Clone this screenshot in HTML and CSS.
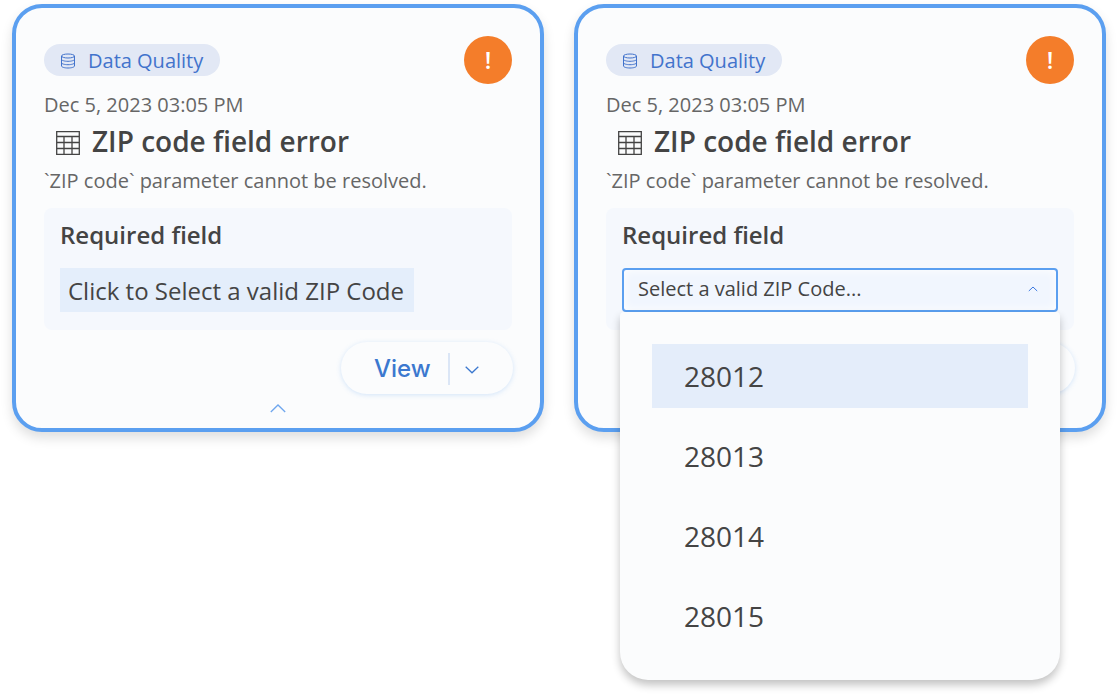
FILE: index.html
```html
<!DOCTYPE html>
<html lang="en">
<head>
<meta charset="utf-8">
<title>ZIP code field error</title>
<link rel="stylesheet" href="styles.css">
</head>
<body>
<main class="board">
  <article class="card">
    <div class="top">
      <span class="tag">
        <svg class="tag-icon" viewBox="0 0 14 15" fill="none" stroke="currentColor" stroke-width="1"><ellipse cx="7" cy="2.500" rx="6.500" ry="2"/><path d="M.5 2.500v10c0 1.100 2.900 2 6.500 2s6.500-.9 6.500-2v-10M.5 5.800c0 1.100 2.900 2 6.500 2s6.500-.9 6.500-2M.5 9.200c0 1.100 2.900 2 6.500 2s6.500-.9 6.500-2"/></svg>
        Data Quality
      </span>
      <span class="alert">!</span>
    </div>
    <div class="date">Dec 5, 2023 03:05 PM</div>
    <h2 class="title">
      <svg class="table-icon" viewBox="0 0 24 24" fill="none" stroke="currentColor" stroke-width="1.300"><path d="M.7.700h22.600v22.600H.7zM.7 5.500h22.600M.7 11.500h22.600M.7 17.500h22.600M8 5.500v17.800M16 5.500v17.800"/></svg>
      ZIP code field error
    </h2>
    <p class="desc">`ZIP code` parameter cannot be resolved.</p>
    <section class="panel">
      <h3 class="panel-title">Required field</h3>
      <div class="link-row"><span class="pick">Click to Select a valid ZIP Code</span></div>
    </section>
    <div class="actions">
      <div class="view-btn">
        <span class="view-label">View</span>
        <span class="view-sep"></span>
        <svg class="view-caret" viewBox="0 0 14 8" fill="none" stroke="currentColor" stroke-width="1.300"><path d="M.7.800 7 6.800 13.300.800"/></svg>
      </div>
    </div>
    <svg class="collapse" viewBox="0 0 16 9" fill="none" stroke="currentColor" stroke-width="1.300"><path d="M.8 8 8 1l7.200 7"/></svg>
  </article>

  <article class="card">
    <div class="top">
      <span class="tag">
        <svg class="tag-icon" viewBox="0 0 14 15" fill="none" stroke="currentColor" stroke-width="1"><ellipse cx="7" cy="2.500" rx="6.500" ry="2"/><path d="M.5 2.500v10c0 1.100 2.900 2 6.500 2s6.500-.9 6.500-2v-10M.5 5.800c0 1.100 2.900 2 6.500 2s6.500-.9 6.500-2M.5 9.200c0 1.100 2.900 2 6.500 2s6.500-.9 6.500-2"/></svg>
        Data Quality
      </span>
      <span class="alert">!</span>
    </div>
    <div class="date">Dec 5, 2023 03:05 PM</div>
    <h2 class="title">
      <svg class="table-icon" viewBox="0 0 24 24" fill="none" stroke="currentColor" stroke-width="1.300"><path d="M.7.700h22.600v22.600H.7zM.7 5.500h22.600M.7 11.500h22.600M.7 17.500h22.600M8 5.500v17.800M16 5.500v17.800"/></svg>
      ZIP code field error
    </h2>
    <p class="desc">`ZIP code` parameter cannot be resolved.</p>
    <section class="panel">
      <h3 class="panel-title">Required field</h3>
      <div class="select">
        <span>Select a valid ZIP Code...</span>
        <svg class="select-caret" viewBox="0 0 10 6" fill="none" stroke="currentColor" stroke-width="1"><path d="M.8 5 5 1l4.200 4"/></svg>
      </div>
    </section>
    <div class="actions">
      <div class="view-btn">
        <span class="view-label">View</span>
        <span class="view-sep"></span>
        <svg class="view-caret" viewBox="0 0 14 8" fill="none" stroke="currentColor" stroke-width="1.300"><path d="M.7.800 7 6.800 13.300.800"/></svg>
      </div>
    </div>
    <ul class="menu">
      <li class="option option-active">28012</li>
      <li class="option">28013</li>
      <li class="option">28014</li>
      <li class="option">28015</li>
    </ul>
  </article>
</main>
</body>
</html>
```
FILE: styles.css
```css
* { box-sizing: border-box; }

html, body { margin: 0; padding: 0; background: #fff; }

body {
  width: 1118px;
  height: 700px;
  overflow: hidden;
  font-family: "Open Sans", sans-serif;
  color: #444;
}

.board {
  display: flex;
  gap: 30px;
  padding: 4px 12px 0;
  align-items: flex-start;
}

.card {
  position: relative;
  width: 532px;
  height: 428px;
  padding: 28px 28px 0;
  border: 4px solid #5b9ff0;
  border-radius: 30px;
  background: #fbfcfd;
  box-shadow: 0 6px 12px rgba(0, 0, 0, 0.13);
}

.top {
  display: flex;
  justify-content: space-between;
  align-items: center;
  height: 48px;
}

.tag {
  display: flex;
  align-items: center;
  gap: 13px;
  height: 32px;
  padding: 2px 17px 0;
  border-radius: 16px;
  background: #e2e8f5;
  color: #4273cc;
  font-size: 20px;
  line-height: 30px;
}

.tag-icon { width: 14px; height: 16px; margin-top: -1px; }

.alert {
  width: 48px;
  height: 48px;
  border-radius: 50%;
  background: #f47d2a;
  color: #fff;
  font-size: 24px;
  font-weight: 600;
  line-height: 48px;
  text-align: center;
}

.date {
  margin-top: 8px;
  font-size: 20px;
  line-height: 26px;
  color: #666;
}

.title {
  display: flex;
  align-items: center;
  gap: 12px;
  height: 40px;
  margin: 3px 0 0;
  padding-left: 12px;
  font-size: 28px;
  font-weight: 600;
  line-height: 40px;
  color: #444;
}

.table-icon { width: 24px; height: 24px; margin-top: 4px; }

.desc {
  margin: 7px 0 0;
  font-size: 20px;
  line-height: 26px;
  color: #666;
}

.panel {
  height: 122px;
  margin-top: 14px;
  padding: 11px 16px 0;
  border-radius: 8px;
  background: #f5f8fd;
}

.panel-title {
  margin: 0;
  font-size: 24px;
  font-weight: 600;
  line-height: 32px;
  color: #444;
}

.link-row { display: flex; margin-top: 17px; }

.pick {
  height: 44px;
  padding: 0 10px 0 8px;
  background: #e4eefb;
  font-size: 24px;
  line-height: 46px;
  color: #444;
}

.select {
  display: flex;
  justify-content: space-between;
  align-items: center;
  height: 44px;
  margin-top: 17px;
  padding: 0 18px 3px 14px;
  border: 2px solid #5b9ff0;
  border-radius: 4px;
  background: #f1f6fe;
  box-shadow: inset 0 0 10px #fff;
  font-size: 20px;
  color: #444;
}

.select-caret { width: 10px; height: 6px; color: #3b78e0; }

.actions {
  display: flex;
  justify-content: flex-end;
  margin: 12px -1px 0 0;
}

.view-btn {
  display: flex;
  align-items: center;
  width: 172px;
  height: 52px;
  padding: 1px 0 0 33px;
  border-radius: 26px;
  background: #fbfcfd;
  box-shadow: 0 1px 5px rgba(91, 159, 240, 0.25);
  color: #3b78cf;
}

.view-label {
  font-family: Inter, sans-serif;
  font-size: 24px;
  font-weight: 500;
  line-height: 52px;
}

.view-sep {
  width: 2px;
  height: 32px;
  margin-left: 17px;
  background: #dbe6f6;
}

.view-caret { width: 14px; height: 8px; margin-left: 15px; margin-top: 2px; }

.collapse {
  position: absolute;
  left: 254px;
  bottom: 15px;
  width: 16px;
  height: 9px;
  color: #6ea6ee;
}

.menu {
  position: absolute;
  left: 42px;
  top: 304px;
  width: 440px;
  height: 368px;
  margin: 0;
  padding: 32px 32px 0;
  list-style: none;
  border-radius: 4px 4px 28px 28px;
  background: #fbfcfd;
  box-shadow: 0 5px 9px rgba(0, 0, 0, 0.24);
}

.option {
  height: 64px;
  margin-bottom: 16px;
  padding-left: 32px;
  font-size: 28px;
  line-height: 64px;
  color: #444;
}

.option-active { background: #e4edfa; }
```
